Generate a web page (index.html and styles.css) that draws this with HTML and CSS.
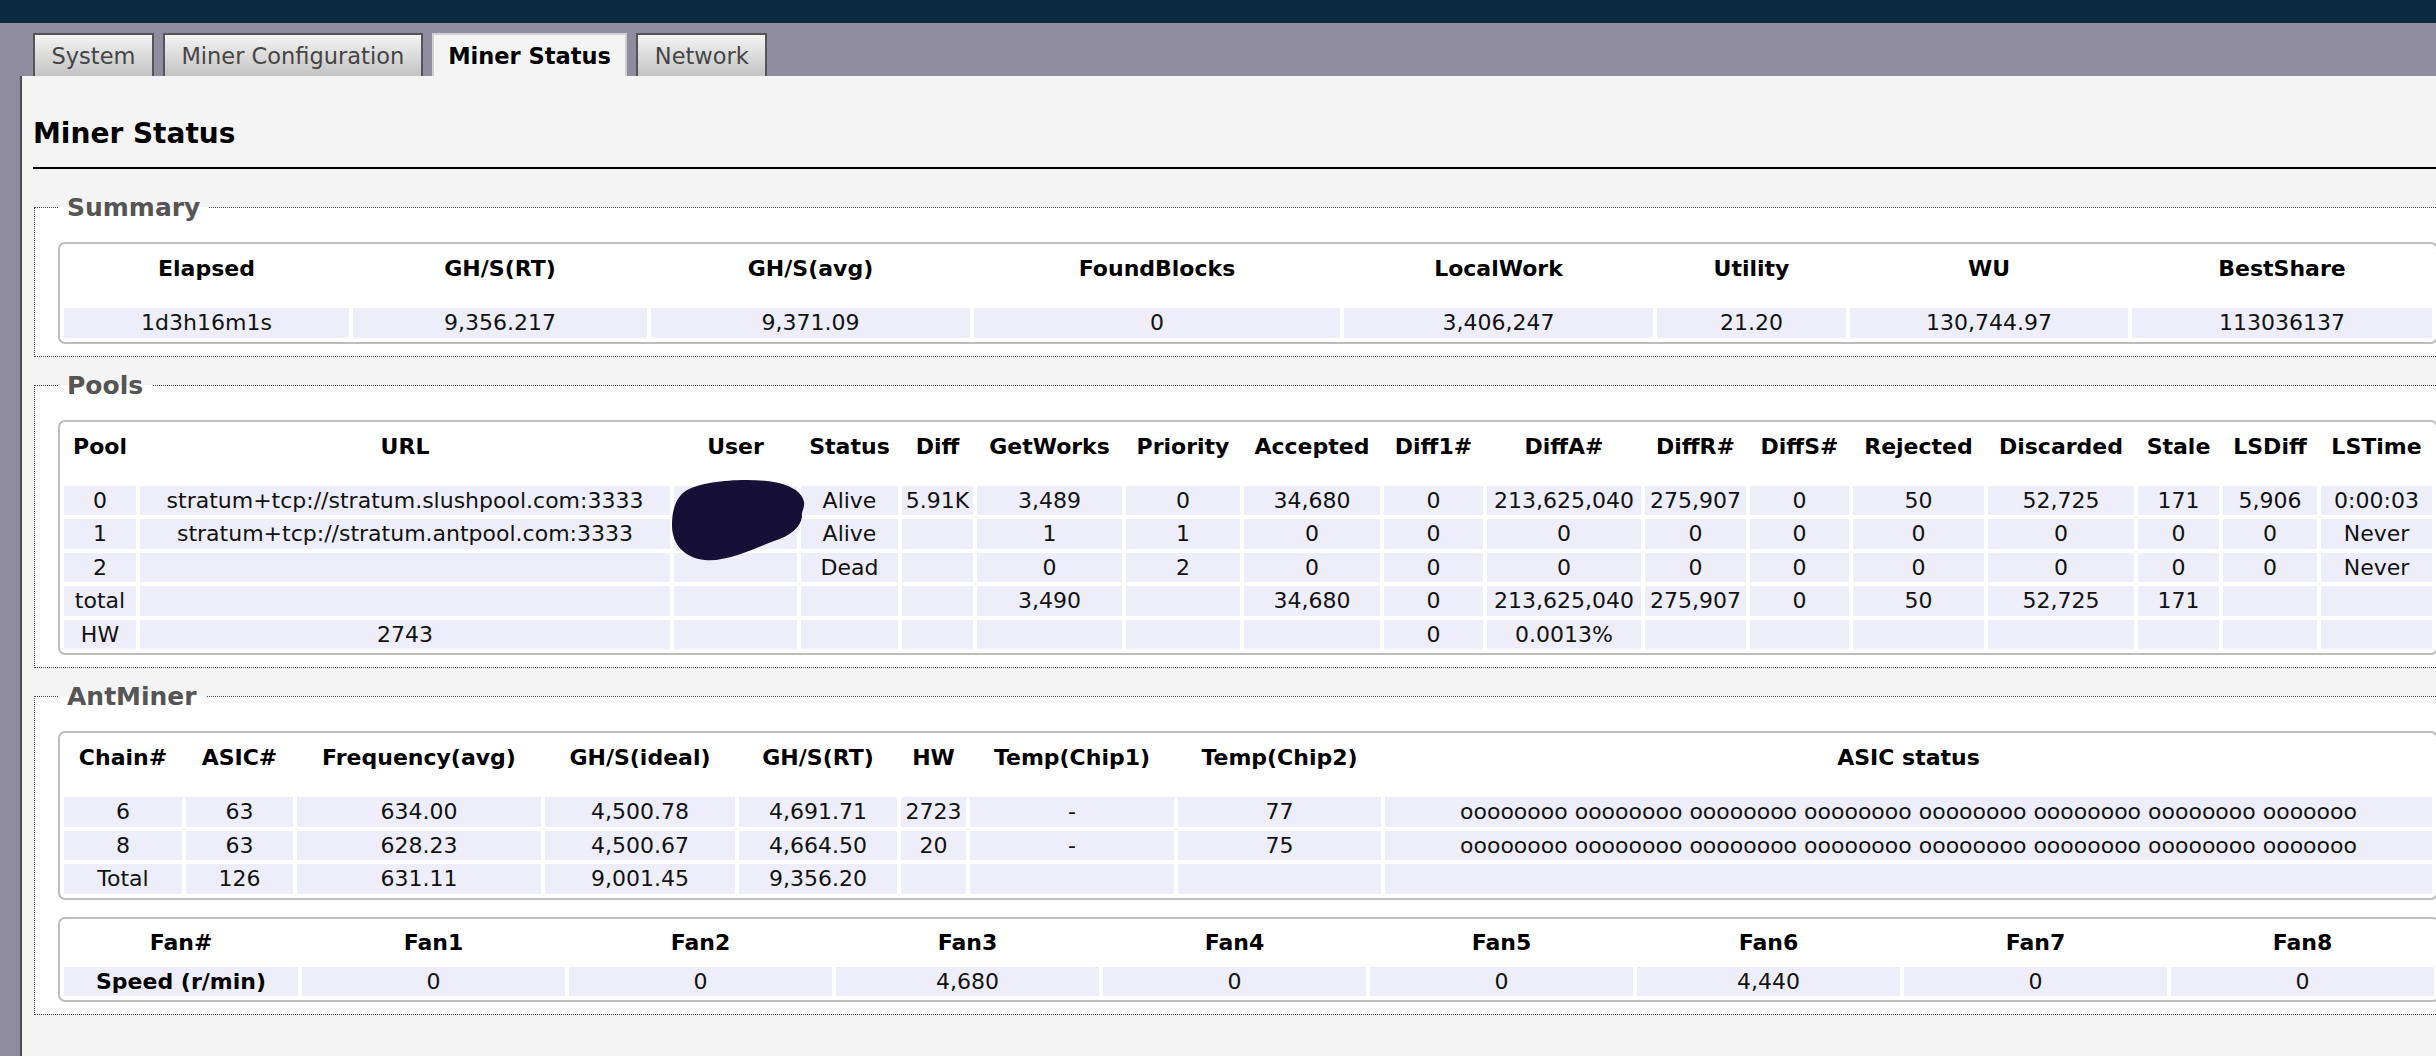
FILE: index.html
```html
<!DOCTYPE html>
<html>
<head>
<meta charset="utf-8">
<title>Miner Status</title>
<link rel="stylesheet" href="styles.css">
</head>
<body>
<div class="topbar"></div>
<div class="tabs">
  <div class="tab">System</div>
  <div class="tab">Miner Configuration</div>
  <div class="tab active">Miner Status</div>
  <div class="tab">Network</div>
</div>
<div class="panel">
  <h2 class="title">Miner Status</h2>

  <fieldset class="section first">
    <legend>Summary</legend>
    <table class="grid">
      <colgroup>
        <col class="s1"><col class="s2"><col class="s3"><col class="s4"><col class="s5"><col class="s6"><col class="s7"><col class="s8">
      </colgroup>
      <tr><th>Elapsed</th><th>GH/S(RT)</th><th>GH/S(avg)</th><th>FoundBlocks</th><th>LocalWork</th><th>Utility</th><th>WU</th><th>BestShare</th></tr>
      <tr><td>1d3h16m1s</td><td>9,356.217</td><td>9,371.09</td><td>0</td><td>3,406,247</td><td>21.20</td><td>130,744.97</td><td>113036137</td></tr>
    </table>
  </fieldset>

  <fieldset class="section">
    <legend>Pools</legend>
    <div class="poolwrap">
      <table class="grid">
        <colgroup>
          <col class="p1"><col class="p2"><col class="p3"><col class="p4"><col class="p5"><col class="p6"><col class="p7"><col class="p8"><col class="p9"><col class="p10"><col class="p11"><col class="p12"><col class="p13"><col class="p14"><col class="p15"><col class="p16"><col class="p17">
        </colgroup>
        <tr><th>Pool</th><th>URL</th><th>User</th><th>Status</th><th>Diff</th><th>GetWorks</th><th>Priority</th><th>Accepted</th><th>Diff1#</th><th>DiffA#</th><th>DiffR#</th><th>DiffS#</th><th>Rejected</th><th>Discarded</th><th>Stale</th><th>LSDiff</th><th>LSTime</th></tr>
        <tr><td>0</td><td>stratum+tcp://stratum.slushpool.com:3333</td><td></td><td>Alive</td><td>5.91K</td><td>3,489</td><td>0</td><td>34,680</td><td>0</td><td>213,625,040</td><td>275,907</td><td>0</td><td>50</td><td>52,725</td><td>171</td><td>5,906</td><td>0:00:03</td></tr>
        <tr><td>1</td><td>stratum+tcp://stratum.antpool.com:3333</td><td></td><td>Alive</td><td></td><td>1</td><td>1</td><td>0</td><td>0</td><td>0</td><td>0</td><td>0</td><td>0</td><td>0</td><td>0</td><td>0</td><td>Never</td></tr>
        <tr><td>2</td><td></td><td></td><td>Dead</td><td></td><td>0</td><td>2</td><td>0</td><td>0</td><td>0</td><td>0</td><td>0</td><td>0</td><td>0</td><td>0</td><td>0</td><td>Never</td></tr>
        <tr><td>total</td><td></td><td></td><td></td><td></td><td>3,490</td><td></td><td>34,680</td><td>0</td><td>213,625,040</td><td>275,907</td><td>0</td><td>50</td><td>52,725</td><td>171</td><td></td><td></td></tr>
        <tr><td>HW</td><td>2743</td><td></td><td></td><td></td><td></td><td></td><td></td><td>0</td><td>0.0013%</td><td></td><td></td><td></td><td></td><td></td><td></td><td></td></tr>
      </table>
      <svg class="blob" width="134" height="84" viewBox="0 0 134 84">
        <path d="M16 12 C34 2 82 -1 108 5 C122 9 131 14 133 24 C134 30 130 33 131 39 C129 50 119 58 103 63 C84 70 56 84 34 82 C13 80 1 66 1 47 C1 30 6 18 16 12 Z" fill="#160f36"/>
      </svg>
    </div>
  </fieldset>

  <fieldset class="section">
    <legend>AntMiner</legend>
    <table class="grid">
      <colgroup>
        <col class="c1"><col class="c2"><col class="c3"><col class="c4"><col class="c5"><col class="c6"><col class="c7"><col class="c8"><col class="c9">
      </colgroup>
      <tr><th>Chain#</th><th>ASIC#</th><th>Frequency(avg)</th><th>GH/S(ideal)</th><th>GH/S(RT)</th><th>HW</th><th>Temp(Chip1)</th><th>Temp(Chip2)</th><th>ASIC status</th></tr>
      <tr><td>6</td><td>63</td><td>634.00</td><td>4,500.78</td><td>4,691.71</td><td>2723</td><td>-</td><td>77</td><td>oooooooo oooooooo oooooooo oooooooo oooooooo oooooooo oooooooo ooooooo</td></tr>
      <tr><td>8</td><td>63</td><td>628.23</td><td>4,500.67</td><td>4,664.50</td><td>20</td><td>-</td><td>75</td><td>oooooooo oooooooo oooooooo oooooooo oooooooo oooooooo oooooooo ooooooo</td></tr>
      <tr><td>Total</td><td>126</td><td>631.11</td><td>9,001.45</td><td>9,356.20</td><td></td><td></td><td></td><td></td></tr>
    </table>
    <table class="grid fans">
      <colgroup>
        <col class="f0"><col class="f1"><col class="f1"><col class="f1"><col class="f1"><col class="f1"><col class="f1"><col class="f1"><col class="f1">
      </colgroup>
      <tr><th>Fan#</th><th>Fan1</th><th>Fan2</th><th>Fan3</th><th>Fan4</th><th>Fan5</th><th>Fan6</th><th>Fan7</th><th>Fan8</th></tr>
      <tr><th class="rowhead">Speed (r/min)</th><td>0</td><td>0</td><td>4,680</td><td>0</td><td>0</td><td>4,440</td><td>0</td><td>0</td></tr>
    </table>
  </fieldset>
</div>
</body>
</html>
```
FILE: styles.css
```css
html, body {
  margin: 0;
  padding: 0;
}
body {
  width: 2436px;
  height: 1056px;
  overflow: hidden;
  background: #908ca0;
  font-family: "DejaVu Sans", Verdana, sans-serif;
  color: #000;
}
.topbar {
  height: 23px;
  background: #0c2b41;
}
.tabs {
  display: flex;
  gap: 9px;
  padding: 10px 0 0 33px;
  box-sizing: border-box;
  height: 53px;
}
.tab {
  border: 2px solid #555;
  border-bottom: 0;
  padding: 1px 16.5px 0;
  line-height: 40px;
  font-size: 22.5px;
  color: #454545;
  background: linear-gradient(#f4f4f4, #c2c2c2);
}
.tab.active {
  border-color: #d0d0d0;
  background: #f4f4f4;
  color: #000;
  font-weight: bold;
  padding: 1px 14.5px 0;
}
.panel {
  margin-left: 20px;
  border-left: 2px solid #4b4b4b;
  background: #f4f4f4;
  padding: 0 0 0 11px;
  width: 2700px;
  height: 1003px;
  box-sizing: border-box;
  overflow: hidden;
  display: flow-root;
}
.title {
  margin: 41px 0 0;
  font-size: 28px;
  line-height: 34px;
  font-weight: bold;
  padding-bottom: 16px;
  border-bottom: 2px solid #000;
}
.section {
  margin: 14px 0 0 1px;
  border: 1px dotted #444;
  background: #fff;
  padding: 20px 0 12px 23px;
  min-width: 0;
}
.section.first {
  margin-top: 24px;
}
legend {
  font-size: 25px;
  line-height: 29px;
  font-weight: bold;
  color: #555;
  padding: 0 9px;
}
.poolwrap {
  position: relative;
}
.blob {
  position: absolute;
  left: 613px;
  top: 58px;
}
.grid {
  width: 2380px;
  table-layout: fixed;
  border: 2px solid #bdbdbd;
  border-radius: 7px;
  border-spacing: 4px;
  background: #fff;
  font-size: 22px;
}
.grid th {
  font-weight: bold;
  text-align: center;
  vertical-align: top;
  padding: 8px 0 22px;
  line-height: 26px;
  white-space: nowrap;
}
.grid td {
  height: 29.5px;
  line-height: 29.5px;
  padding: 0;
  background: #eeeefa;
  text-align: center;
  color: #111;
  white-space: nowrap;
}
.fans {
  margin-top: 17px;
}
.fans th {
  padding: 7px 0;
}
.fans th.rowhead {
  background: #eeeefa;
  padding: 0;
  line-height: 29.5px;
  vertical-align: middle;
}
.s1 { width: 285px; }
.s2 { width: 294px; }
.s3 { width: 319px; }
.s4 { width: 366px; }
.s5 { width: 309px; }
.s6 { width: 189px; }
.s7 { width: 278px; }
.s8 { width: 300px; }
.p1 { width: 72px; }
.p2 { width: 530px; }
.p3 { width: 123px; }
.p4 { width: 97px; }
.p5 { width: 71px; }
.p6 { width: 145px; }
.p7 { width: 114px; }
.p8 { width: 136px; }
.p9 { width: 99px; }
.p10 { width: 154px; }
.p11 { width: 101px; }
.p12 { width: 99px; }
.p13 { width: 131px; }
.p14 { width: 146px; }
.p15 { width: 81px; }
.p16 { width: 94px; }
.p17 { width: 111px; }
.c1 { width: 118px; }
.c2 { width: 107px; }
.c3 { width: 244px; }
.c4 { width: 190px; }
.c5 { width: 158px; }
.c6 { width: 65px; }
.c7 { width: 204px; }
.c8 { width: 203px; }
.c9 { width: 1047px; }
.f0 { width: 234px; }
.f1 { width: 263px; }
```
